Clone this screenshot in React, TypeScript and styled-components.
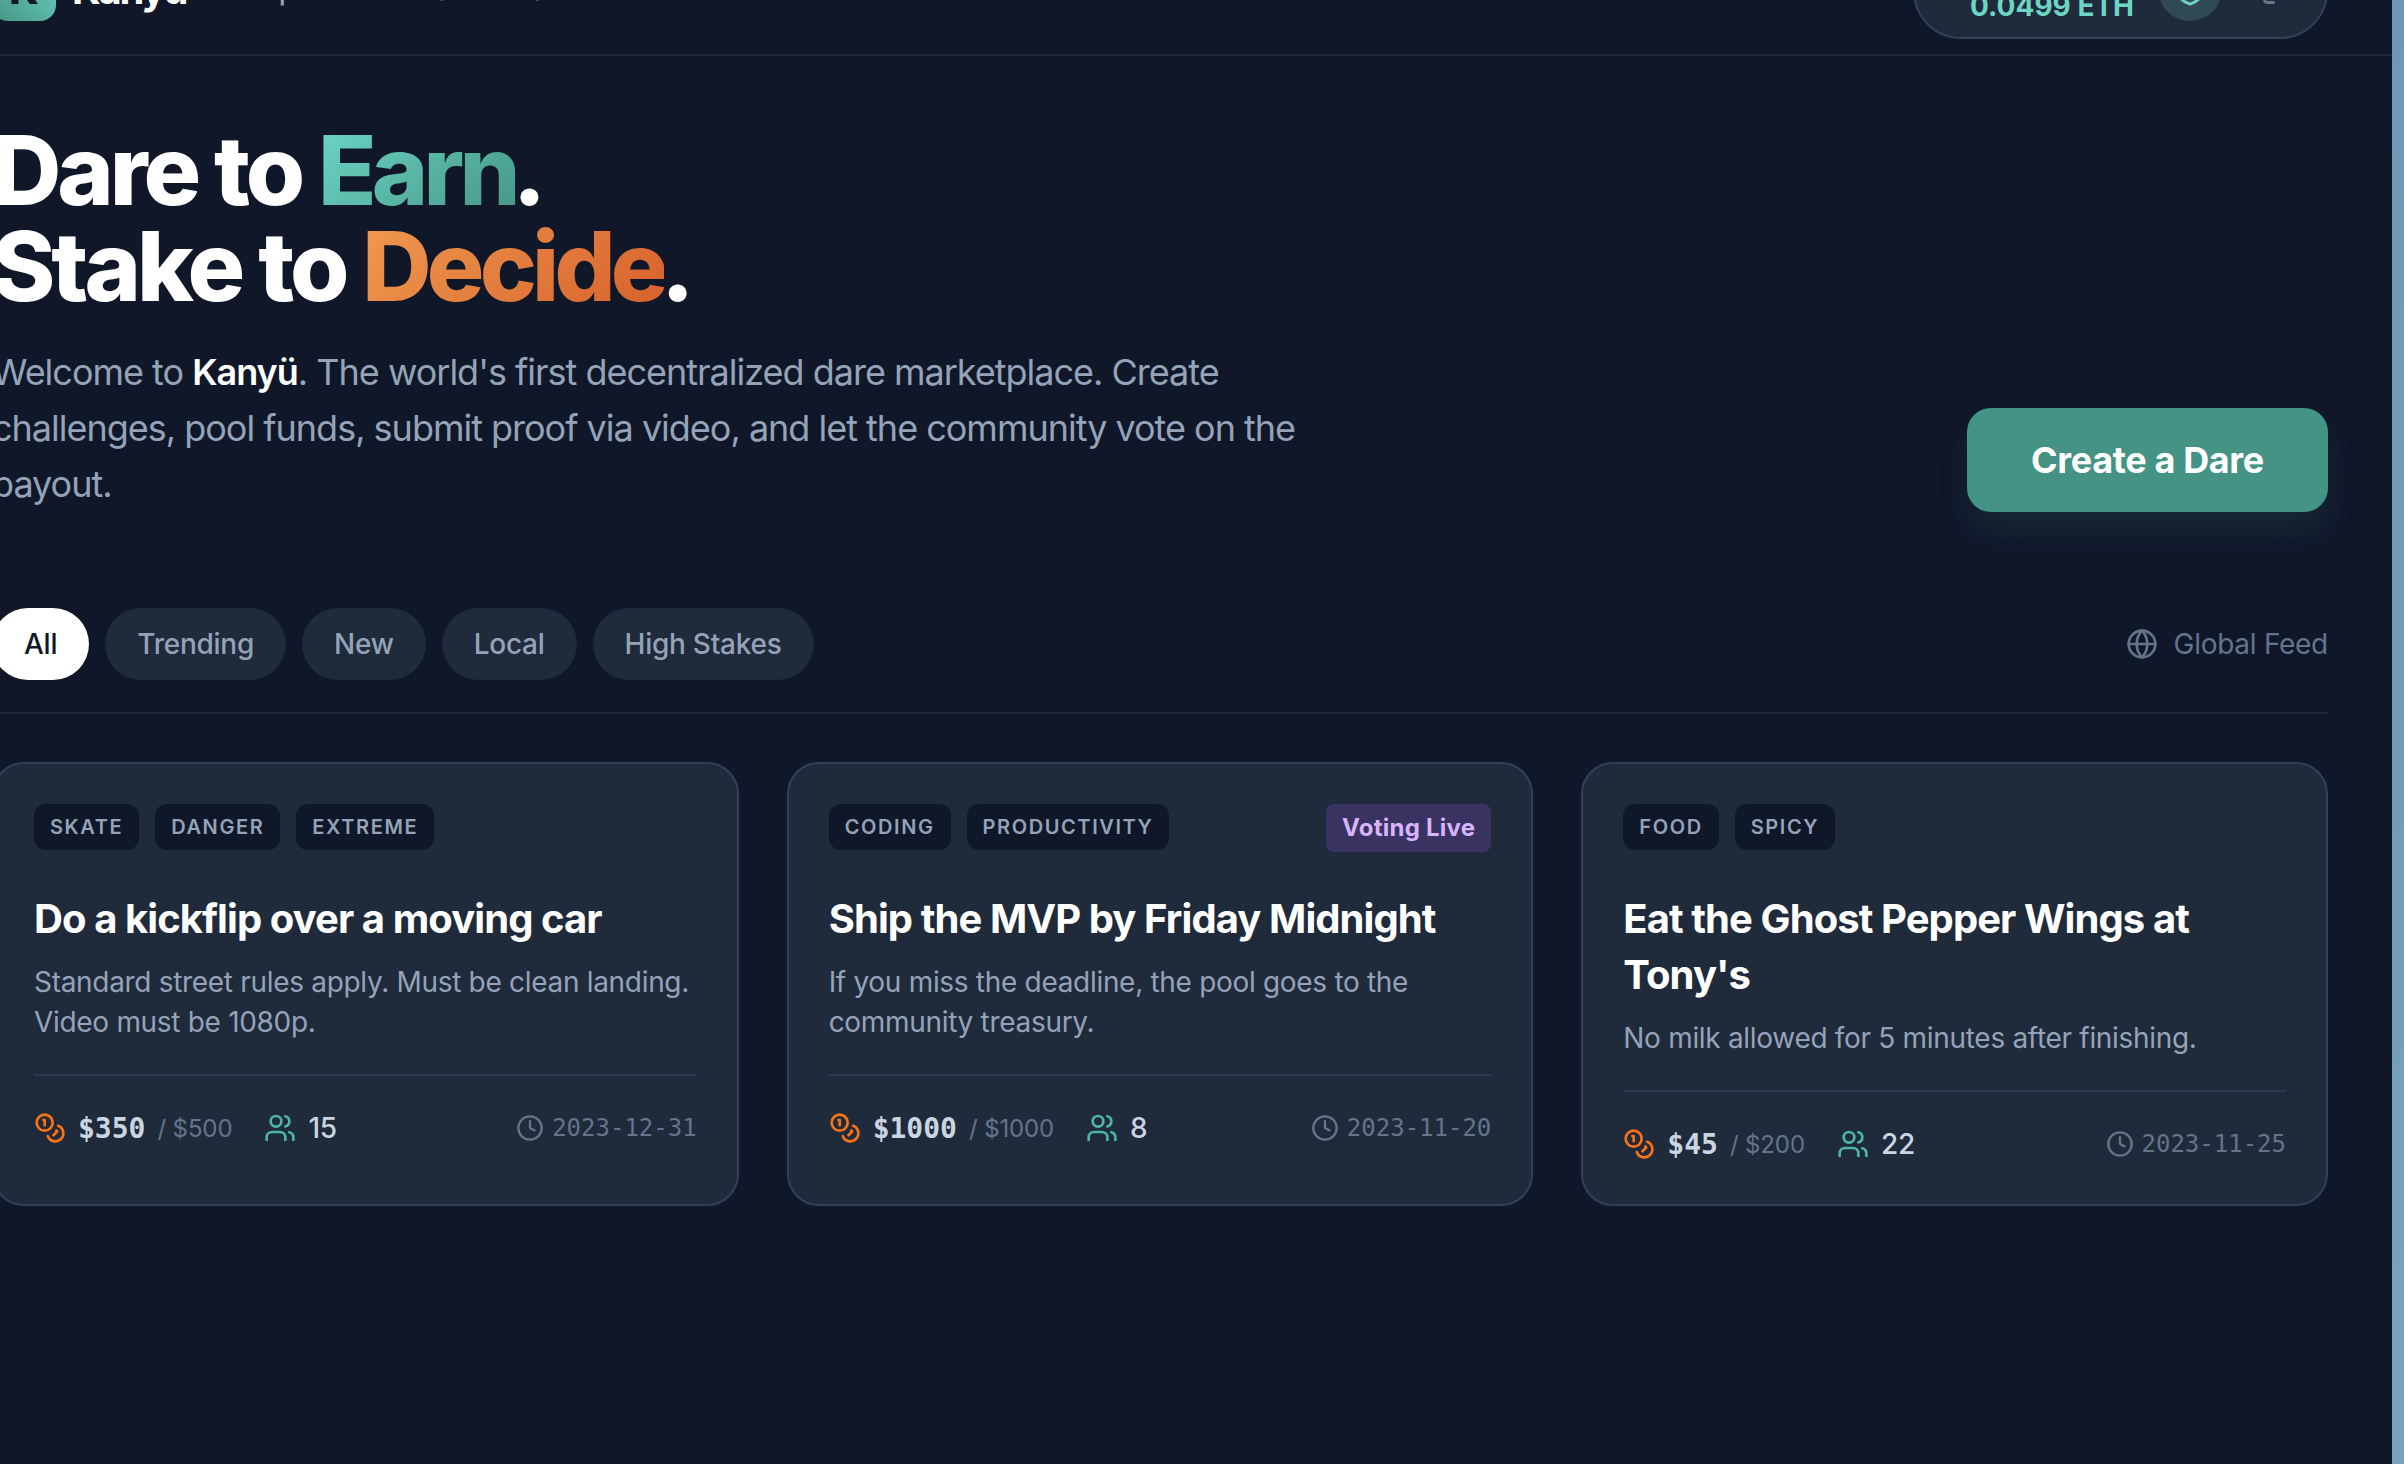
import { Clock, Coins, Globe, LogOut, Shield, Users } from 'lucide-react';
import styled, { createGlobalStyle } from 'styled-components';

interface Dare {
  tags: string[];
  title: string;
  description: string;
  raised: string;
  goal: string;
  people: number;
  date: string;
  voting?: boolean;
}

const DARES: Dare[] = [
  {
    tags: ['Skate', 'Danger', 'Extreme'],
    title: 'Do a kickflip over a moving car',
    description:
      'Standard street rules apply. Must be clean landing. Video must be 1080p.',
    raised: '$350',
    goal: '$500',
    people: 15,
    date: '2023-12-31',
  },
  {
    tags: ['Coding', 'Productivity'],
    title: 'Ship the MVP by Friday Midnight',
    description:
      'If you miss the deadline, the pool goes to the community treasury.',
    raised: '$1000',
    goal: '$1000',
    people: 8,
    date: '2023-11-20',
    voting: true,
  },
  {
    tags: ['Food', 'Spicy'],
    title: "Eat the Ghost Pepper Wings at Tony's",
    description: 'No milk allowed for 5 minutes after finishing.',
    raised: '$45',
    goal: '$200',
    people: 22,
    date: '2023-11-25',
  },
];

const FILTERS = ['All', 'Trending', 'New', 'Local', 'High Stakes'];
const LINKS = ['Explore', 'Leaderboard', 'Profile'];

function DareCard({ dare }: { dare: Dare }) {
  return (
    <Card>
      <TagRow>
        <Tags>
          {dare.tags.map((tag) => (
            <Tag key={tag}>{tag}</Tag>
          ))}
        </Tags>
        {dare.voting && <VotingBadge>Voting Live</VotingBadge>}
      </TagRow>
      <CardTitle>{dare.title}</CardTitle>
      <CardText>{dare.description}</CardText>
      <CardFooter>
        <Stats>
          <Stat>
            <Coins size={32} color="#f97316" />
            <Raised>{dare.raised}</Raised>
            <Goal>/ {dare.goal}</Goal>
          </Stat>
          <Stat>
            <Users size={32} color="#4db6a4" />
            <People>{dare.people}</People>
          </Stat>
        </Stats>
        <DateBox>
          <Clock size={28} />
          {dare.date}
        </DateBox>
      </CardFooter>
    </Card>
  );
}

export default function App() {
  return (
    <>
      <GlobalStyle />
      <Screen>
        <Page>
          <Nav>
            <Brand>
              <LogoTile>K</LogoTile>
              <BrandName>Kanyü</BrandName>
              <NavLinks>
                {LINKS.map((link) => (
                  <NavLink key={link}>{link}</NavLink>
                ))}
              </NavLinks>
            </Brand>
            <Wallet>
              <Balance>0.0499 ETH</Balance>
              <Avatar>
                <Shield size={36} color="#6dd5c3" />
              </Avatar>
              <LogOut size={36} color="#64748b" />
            </Wallet>
          </Nav>
          <Main>
            <Hero>
              <div>
                <Headline>
                  Dare to <TealText>Earn</TealText>.
                  <br />
                  Stake to <OrangeText>Decide</OrangeText>.
                </Headline>
                <Intro>
                  Welcome to <strong>Kanyü</strong>. The world's first
                  decentralized dare marketplace. Create challenges, pool funds,
                  submit proof via video, and let the community vote on the
                  payout.
                </Intro>
              </div>
              <CreateBtn>Create a Dare</CreateBtn>
            </Hero>
            <FilterBar>
              <Pills>
                {FILTERS.map((filter) => (
                  <Pill key={filter} $active={filter === 'All'}>
                    {filter}
                  </Pill>
                ))}
              </Pills>
              <FeedLabel>
                <Globe size={32} />
                Global Feed
              </FeedLabel>
            </FilterBar>
            <CardGrid>
              {DARES.map((dare) => (
                <DareCard key={dare.title} dare={dare} />
              ))}
            </CardGrid>
          </Main>
        </Page>
        <EdgeStrip />
      </Screen>
    </>
  );
}

const GlobalStyle = createGlobalStyle`
  * {
    box-sizing: border-box;
  }
  body {
    margin: 0;
    background-color: #101729;
    font-family: Inter, 'Noto Sans', sans-serif;
    -webkit-font-smoothing: antialiased;
  }
`;

const Screen = styled.div`
  display: flex;
  width: 2404px;
  height: 1464px;
  overflow: hidden;
`;

const EdgeStrip = styled.div`
  flex: 0 0 12px;
  background: linear-gradient(180deg, #6b98b6 0%, #78a2bd 100%);
`;

const Page = styled.div`
  flex: 1;
  min-width: 0;
  margin: -76px 0 0 -8px;
  background-color: #101729;
`;

const Nav = styled.nav`
  display: flex;
  justify-content: space-between;
  align-items: center;
  padding: 15px 64px 15px 0;
  border-bottom: 2px solid #1f2a3b;
`;

const Brand = styled.div`
  display: flex;
  align-items: center;
`;

const LogoTile = styled.div`
  display: flex;
  justify-content: center;
  align-items: center;
  width: 64px;
  height: 64px;
  border-radius: 16px;
  background: linear-gradient(45deg, #459485, #6dd5c3);
  color: #101729;
  font-size: 40px;
  font-weight: 800;
`;

const BrandName = styled.span`
  margin-left: 16px;
  color: #fff;
  font-size: 40px;
  font-weight: 700;
  letter-spacing: -0.055em;
`;

const NavLinks = styled.div`
  display: flex;
  gap: 56px;
  margin: 2px 0 0 60px;
`;

const NavLink = styled.span`
  color: #94a3b8;
  font-size: 28px;
  font-weight: 500;
`;

const Wallet = styled.div`
  display: flex;
  align-items: center;
  gap: 24px;
  height: 100px;
  padding: 16px 30px 16px 55px;
  border: 2px solid #334155;
  border-radius: 48px;
  background-color: #1f2a3b;
`;

const Balance = styled.span`
  align-self: flex-end;
  color: #6dd5c3;
  font-size: 28px;
  font-weight: 700;
  line-height: 30px;
`;

const Avatar = styled.div`
  display: flex;
  justify-content: center;
  align-items: center;
  width: 64px;
  height: 64px;
  margin-right: 14px;
  border-radius: 50%;
  background-color: #2f4a54;
`;

const Main = styled.main`
  padding: 64px 64px 0 0;
`;

const Hero = styled.section`
  display: flex;
  justify-content: space-between;
  align-items: flex-end;
  margin-bottom: 96px;
`;

const Headline = styled.h1`
  margin: 0 0 30px;
  padding-top: 2px;
  color: #fff;
  font-size: 96px;
  font-weight: 800;
  line-height: 96px;
  letter-spacing: -0.042em;
`;

const TealText = styled.span`
  margin-right: -3px;
  background: linear-gradient(135deg, #6dd8c6, #459485);
  -webkit-background-clip: text;
  background-clip: text;
  color: transparent;
  letter-spacing: -0.05em;
`;

const OrangeText = styled.span`
  margin-right: -3px;
  background: linear-gradient(135deg, #f09c50, #d65f2b);
  -webkit-background-clip: text;
  background-clip: text;
  color: transparent;
  letter-spacing: -0.05em;
`;

const Intro = styled.p`
  max-width: 1344px;
  margin: 0;
  color: #94a3b8;
  font-size: 36px;
  line-height: 56px;
  letter-spacing: -0.028em;

  strong {
    color: #fff;
    font-weight: 600;
  }
`;

const CreateBtn = styled.button`
  width: 361px;
  height: 104px;
  border: 0;
  border-radius: 24px;
  background-color: #449384;
  box-shadow: 0 20px 30px rgba(68, 147, 132, 0.12);
  color: #fff;
  font-family: inherit;
  font-size: 36px;
  font-weight: 700;
  letter-spacing: -0.01em;
`;

const FilterBar = styled.div`
  display: flex;
  justify-content: space-between;
  align-items: center;
  margin-bottom: 48px;
  padding-bottom: 32px;
  border-bottom: 2px solid #1f2a3b;
`;

const Pills = styled.div`
  display: flex;
  gap: 16px;
`;

const Pill = styled.button<{ $active?: boolean }>`
  height: 72px;
  padding: 0 32px;
  border: 0;
  border-radius: 36px;
  background-color: ${({ $active }) => ($active ? '#fff' : '#1f2a3b')};
  color: ${({ $active }) => ($active ? '#101729' : '#94a3b8')};
  font-family: inherit;
  font-size: 28px;
  font-weight: 500;
  letter-spacing: -0.009em;
`;

const FeedLabel = styled.div`
  display: flex;
  align-items: center;
  gap: 16px;
  color: #64748b;
  font-size: 28px;
  letter-spacing: -0.01em;
`;

const CardGrid = styled.div`
  display: grid;
  grid-template-columns: repeat(3, 1fr);
  gap: 48px;
`;

const Card = styled.article`
  padding: 40px;
  border: 2px solid #334155;
  border-radius: 32px;
  background-color: #1f2a3b;
`;

const TagRow = styled.div`
  display: flex;
  justify-content: space-between;
  align-items: flex-start;
  height: 46px;
  margin-bottom: 40px;
`;

const Tags = styled.div`
  display: flex;
  gap: 16px;
`;

const Tag = styled.span`
  height: 46px;
  padding: 0 16px;
  border-radius: 12px;
  background-color: #101729;
  color: #94a3b8;
  font-size: 20px;
  font-weight: 600;
  line-height: 46px;
  letter-spacing: 0.08em;
  text-transform: uppercase;
`;

const VotingBadge = styled.span`
  padding: 8px 16px;
  border-radius: 8px;
  background-color: rgba(168, 85, 247, 0.2);
  color: #d8b4fe;
  font-size: 24px;
  font-weight: 700;
  line-height: 32px;
  letter-spacing: 0.01em;
`;

const CardTitle = styled.h3`
  margin: 0 0 15px;
  padding-top: 1px;
  color: #fff;
  font-size: 40px;
  font-weight: 700;
  line-height: 56px;
  letter-spacing: -0.023em;
`;

const CardText = styled.p`
  margin: 0 0 32px;
  color: #94a3b8;
  font-size: 28px;
  line-height: 40px;
  letter-spacing: -0.011em;
`;

const CardFooter = styled.div`
  display: flex;
  justify-content: space-between;
  align-items: center;
  height: 74px;
  padding-top: 32px;
  border-top: 2px solid #2b384b;
`;

const Stats = styled.div`
  display: flex;
  align-items: center;
  gap: 32px;
`;

const Stat = styled.div`
  display: flex;
  align-items: center;
  gap: 12px;
`;

const Raised = styled.span`
  color: #cbd5e1;
  font-family: 'DejaVu Sans Mono', monospace;
  font-size: 28px;
  font-weight: 700;
`;

const Goal = styled.span`
  color: #64748b;
  font-size: 24px;
  letter-spacing: -0.005em;
`;

const People = styled.span`
  color: #cbd5e1;
  font-size: 28px;
  font-weight: 500;
  letter-spacing: -0.01em;
`;

const DateBox = styled.div`
  display: flex;
  align-items: center;
  gap: 8px;
  color: #64748b;
  font-family: 'DejaVu Sans Mono', monospace;
  font-size: 24px;
`;
